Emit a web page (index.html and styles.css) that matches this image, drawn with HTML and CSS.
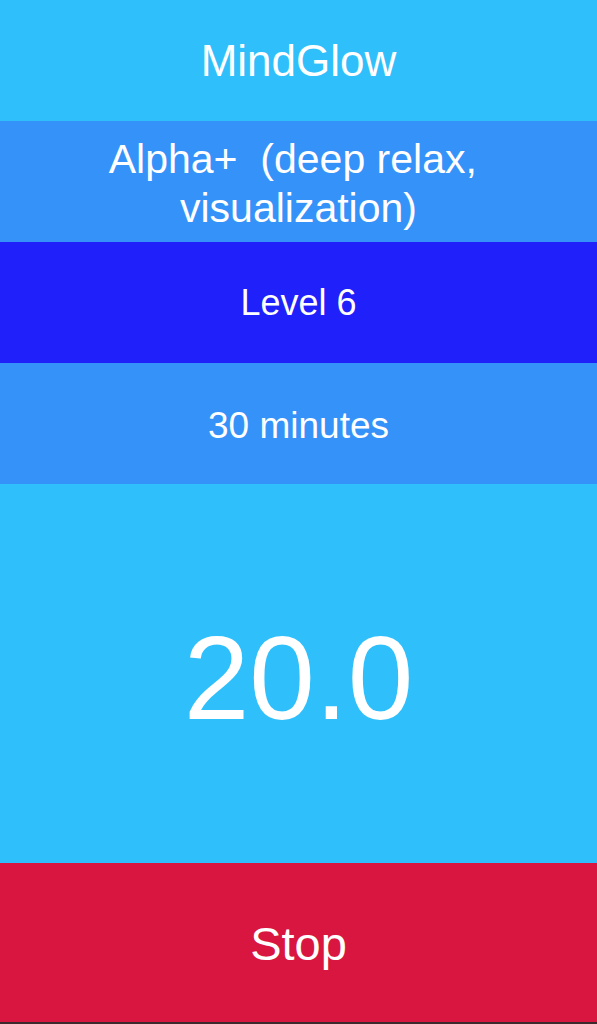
FILE: index.html
```html
<!DOCTYPE html>
<html>
<head>
<meta charset="utf-8">
<link rel="stylesheet" href="styles.css">
</head>
<body>
<main class="app">
  <header class="band band-title">MindGlow</header>
  <div class="band band-mode">Alpha+&nbsp; (deep relax,&nbsp;<br>visualization)</div>
  <div class="band band-level">Level 6</div>
  <div class="band band-duration">30 minutes</div>
  <div class="band band-timer">20.0</div>
  <button class="band band-stop">Stop</button>
  <div class="edge"></div>
</main>
</body>
</html>
```
FILE: styles.css
```css
html, body {
  margin: 0;
  padding: 0;
}
body {
  width: 597px;
  height: 1024px;
  overflow: hidden;
  font-family: "Liberation Sans", Arial, sans-serif;
  color: #ffffff;
}
.app {
  display: flex;
  flex-direction: column;
  height: 1024px;
}
.band {
  display: flex;
  align-items: center;
  justify-content: center;
  text-align: center;
  flex: none;
  box-sizing: border-box;
}
.band-title {
  height: 121px;
  background: #2fbffb;
  font-size: 44px;
}
.band-mode {
  height: 121px;
  padding-top: 4px;
  background: #3592f9;
  font-size: 41px;
  line-height: 49px;
}
.band-level {
  height: 121px;
  background: #2020fb;
  font-size: 36px;
}
.band-duration {
  height: 121px;
  padding-top: 4px;
  background: #3592f9;
  font-size: 37px;
}
.band-timer {
  height: 379px;
  padding-top: 8px;
  background: #2fbffb;
  font-size: 118px;
}
.band-stop {
  height: 159px;
  border: none;
  margin: 0;
  padding: 2px 0 0;
  width: 100%;
  background: #d9163f;
  color: #ffffff;
  font-family: inherit;
  font-size: 47px;
}
.edge {
  height: 2px;
  background: #3a2a2c;
}
```
